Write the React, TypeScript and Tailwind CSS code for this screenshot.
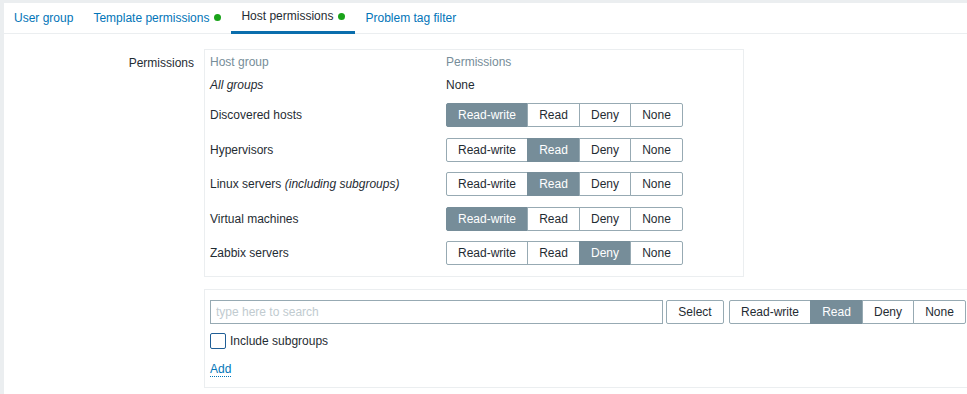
import { useState } from 'react'

type Perm = 'Read-write' | 'Read' | 'Deny' | 'None'

const options: Perm[] = ['Read-write', 'Read', 'Deny', 'None']
const widths: Record<Perm, string> = {
  'Read-write': 'w-[82px]',
  Read: 'w-[53px]',
  Deny: 'w-[52px]',
  None: 'w-[53px]',
}

const groups: { name: string; note?: string; perm: Perm }[] = [
  { name: 'Discovered hosts', perm: 'Read-write' },
  { name: 'Hypervisors', perm: 'Read' },
  { name: 'Linux servers', note: '(including subgroups)', perm: 'Read' },
  { name: 'Virtual machines', perm: 'Read-write' },
  { name: 'Zabbix servers', perm: 'Deny' },
]

const tabs = [
  { name: 'User group' },
  { name: 'Template permissions', dot: true },
  { name: 'Host permissions', dot: true, active: true },
  { name: 'Problem tag filter' },
]

function Segmented({ value, onChange }: { value: Perm; onChange: (p: Perm) => void }) {
  return (
    <div className="flex h-6">
      {options.map((o, i) => (
        <button
          key={o}
          type="button"
          onClick={() => onChange(o)}
          className={
            'h-6 border border-[#97aab3] text-xs leading-none ' +
            widths[o] +
            (i > 0 ? ' -ml-px' : '') +
            (i === 0 ? ' rounded-l-[2px]' : '') +
            (i === options.length - 1 ? ' rounded-r-[2px]' : '') +
            (value === o ? ' border-[#768d99] bg-[#768d99] text-white' : ' bg-white text-[#1f2c33]')
          }
        >
          {o}
        </button>
      ))}
    </div>
  )
}

export default function App() {
  const [perms, setPerms] = useState<Perm[]>(groups.map((g) => g.perm))
  const [newPerm, setNewPerm] = useState<Perm>('Read')
  const [subgroups, setSubgroups] = useState(false)

  return (
    <div
      className="h-[394px] w-[967px] overflow-hidden bg-[#ebeef0] pl-[4px] pt-[3px] text-xs text-[#1f2c33]"
      style={{ fontFamily: '"Liberation Sans", Arial, sans-serif' }}
    >
      <div className="h-full bg-white">
        {/* tabs */}
        <nav className="flex h-[31px] border-b border-[#ebeef0]">
          {tabs.map((t) => (
            <a
              key={t.name}
              href="#"
              className={
                'flex h-[31px] items-center gap-[5px] px-[10px] pb-[2px] ' +
                (t.active ? 'border-b-[3px] border-[#0a6ead] pb-0 text-[#1f2c33]' : 'text-[#0275b8]')
              }
            >
              {t.name}
              {t.dot && <span className="size-[7px] rounded-full bg-[#1aa31a]" />}
            </a>
          ))}
        </nav>

        <div className="flex pt-[15px]">
          <div className="w-[190px] shrink-0 pt-[6px] text-right">Permissions</div>
          <div className="ml-[10px] flex shrink-0 flex-col gap-[12px]">
            {/* current permissions */}
            <div className="w-[540px] border border-[#ebeef0] px-[5px] pb-[5px]">
              <div className="flex h-[24px] items-center text-[#768d99]">
                <div className="w-[236px]">Host group</div>
                <div>Permissions</div>
              </div>
              <div className="flex h-[21px] items-center">
                <div className="w-[236px] italic">All groups</div>
                <div>None</div>
              </div>
              <div className="pt-[3px]">
                {groups.map((g, i) => (
                  <div key={g.name} className="flex h-[34.5px] items-center">
                    <div className="w-[236px]">
                      {g.name}
                      {g.note && <i> {g.note}</i>}
                    </div>
                    <Segmented
                      value={perms[i]}
                      onChange={(p) => setPerms(perms.map((x, j) => (j === i ? p : x)))}
                    />
                  </div>
                ))}
              </div>
            </div>

            {/* add new */}
            <div className="w-[775px] border border-[#ebeef0] px-[5px] pb-[10px] pt-[10px]">
              <div className="flex items-center">
                <input
                  placeholder="type here to search"
                  className="h-6 w-[453px] border border-[#97aab3] px-[5px] text-xs outline-none placeholder:text-[#c1cbd0]"
                />
                <button type="button" className="ml-[3px] h-6 w-[58px] rounded-[2px] border border-[#97aab3] bg-white">
                  Select
                </button>
                <div className="ml-[5px]">
                  <Segmented value={newPerm} onChange={setNewPerm} />
                </div>
              </div>
              <label className="mt-[9px] flex h-4 items-center gap-[4px]">
                <input
                  type="checkbox"
                  checked={subgroups}
                  onChange={(e) => setSubgroups(e.target.checked)}
                  className="size-4 appearance-none rounded-[2px] border border-[#1f5e96] bg-white"
                />
                Include subgroups
              </label>
              <div className="mt-[12px]">
                <a href="#" className="border-b border-dotted border-[#0275b8] text-[#0275b8]">
                  Add
                </a>
              </div>
            </div>
          </div>
        </div>
      </div>
    </div>
  )
}
